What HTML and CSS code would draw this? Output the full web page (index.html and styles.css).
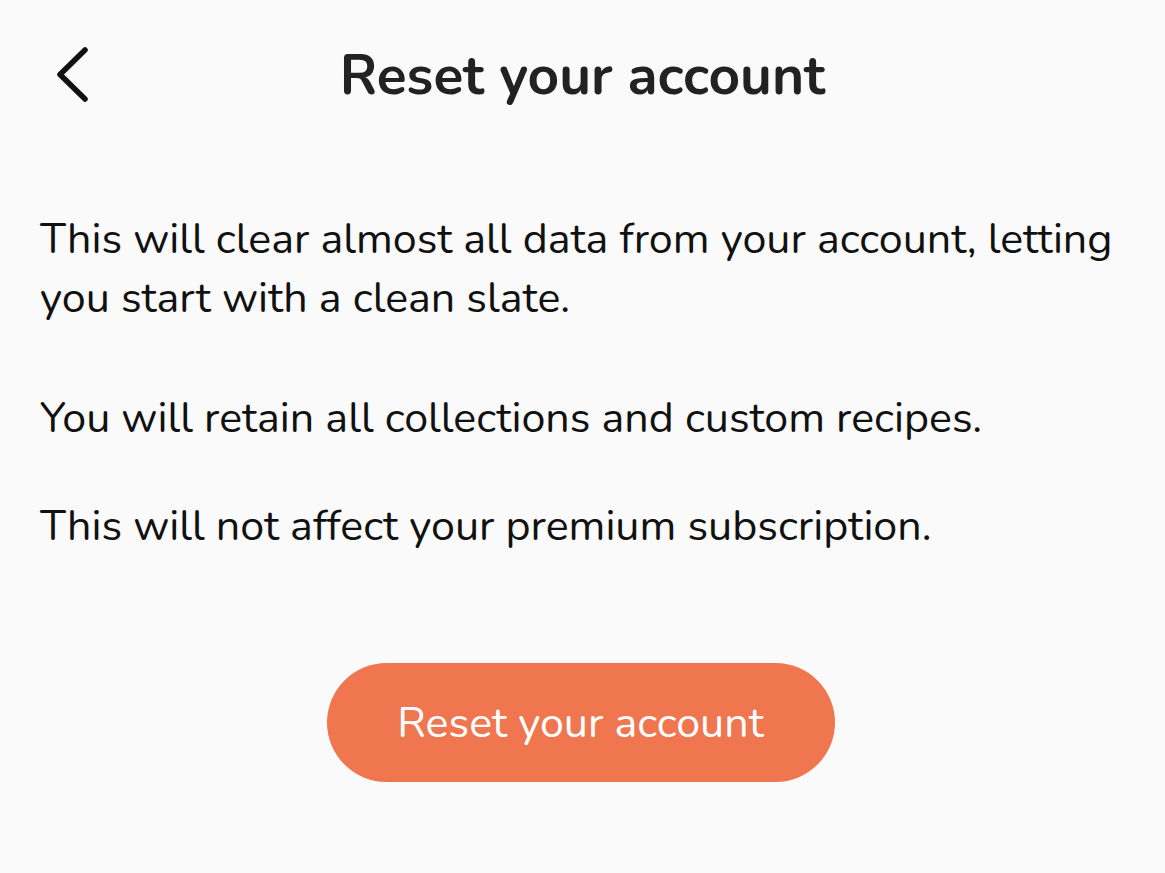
FILE: index.html
```html
<!DOCTYPE html>
<html lang="en">
<head>
<meta charset="utf-8">
<title>Reset your account</title>
<link rel="stylesheet" href="styles.css">
</head>
<body>
<div class="screen">
  <header class="topbar">
    <button class="back" aria-label="Back">
      <svg width="40" height="60" viewBox="0 0 40 60" fill="none" stroke="#111" stroke-width="5.5" stroke-linecap="round" stroke-linejoin="round"><path d="M31 5 L6 29.5 L31 54"/></svg>
    </button>
    <h1 class="title">Reset your account</h1>
    <span class="spacer"></span>
  </header>
  <main class="content">
    <p class="para p1">This will clear almost all data from your account, letting you start with a clean slate.</p>
    <p class="para p2">You will retain all collections and custom recipes.</p>
    <p class="para p3">This will not affect your premium subscription.</p>
    <div class="actions">
      <button class="reset-btn">Reset your account</button>
    </div>
  </main>
</div>
</body>
</html>
```
FILE: styles.css
```css
html, body {
  margin: 0;
  padding: 0;
  background: #fafafa;
}
body {
  font-family: "Nunito", "Lato", "Open Sans", sans-serif;
  color: #1a1a1a;
}
.screen {
  width: 1165px;
  height: 873px;
}
.topbar {
  display: grid;
  grid-template-columns: 1fr auto 1fr;
  align-items: center;
  height: 150px;
}
.back {
  justify-self: start;
  margin-left: 54px;
  background: none;
  border: 0;
  padding: 0;
  width: 40px;
  height: 60px;
  display: flex;
}
.title {
  margin: 0;
  font-size: 55px;
  font-weight: 700;
  color: #222;
  line-height: 1;
}
.content {
  padding: 60px 40px 0 40px;
}
.para {
  margin: 0;
  font-size: 43px;
  line-height: 59px;
  color: #111;
}
.p2 { margin-top: 61px; }
.p3 { margin-top: 49px; }
.actions {
  display: flex;
  justify-content: center;
  margin-top: 107px;
  padding-right: 4px;
}
.reset-btn {
  width: 508px;
  height: 119px;
  border: 0;
  border-radius: 60px;
  background: #f07650;
  color: #fff;
  font-family: inherit;
  font-size: 43px;
  font-weight: 400;
}
```
